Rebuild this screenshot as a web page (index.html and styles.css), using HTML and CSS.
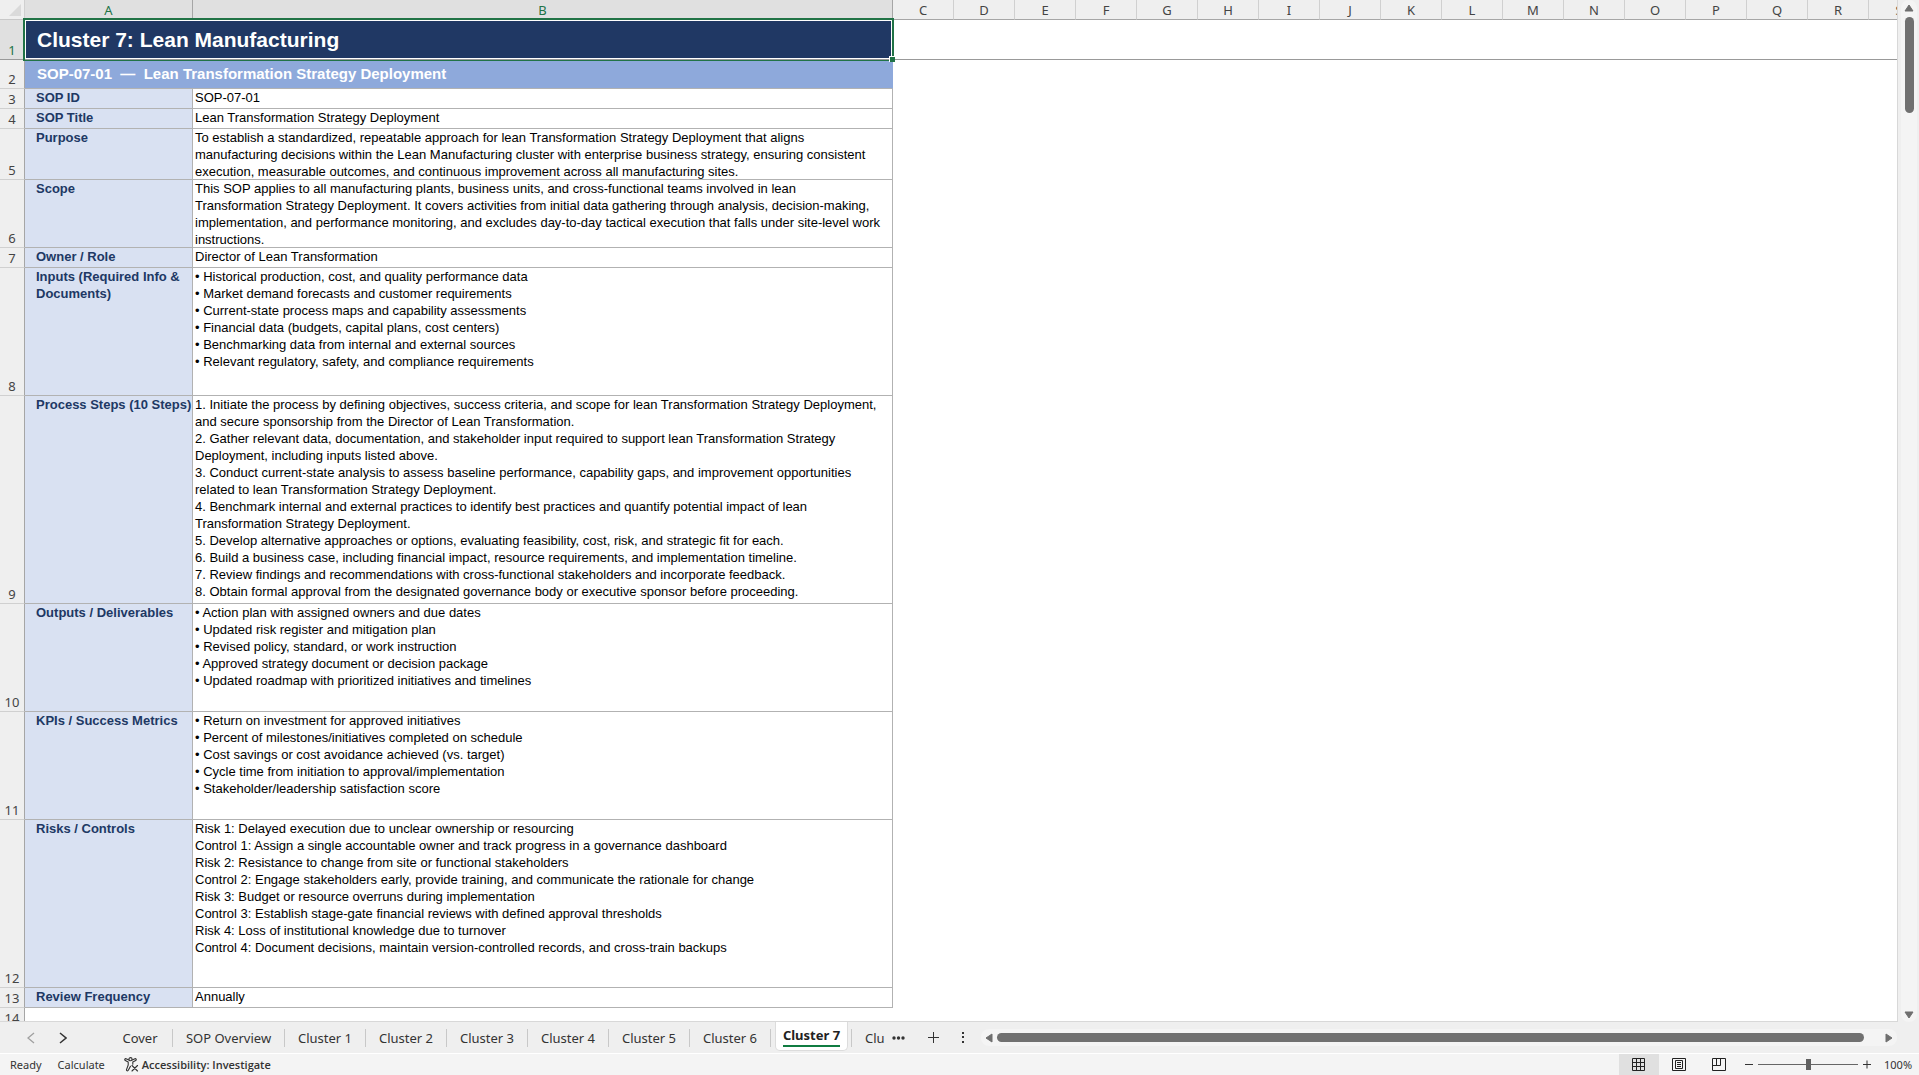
FILE: index.html
```html
<!DOCTYPE html>
<html lang="en">
<head>
<meta charset="utf-8">
<title>Cluster 7: Lean Manufacturing</title>
<meta name="viewport" content="width=device-width, initial-scale=1">
<link rel="stylesheet" href="styles.css">
</head>
<body>
  <div class="workspace">
    <div class="grid">
      <table class="sheet">
        <colgroup>
          <col class="col-num"><col class="col-a"><col class="col-b">
          <col span="17" class="col-std">
        </colgroup>
        <thead>
          <tr>
            <th class="corner"><svg width="12" height="12" viewBox="0 0 12 12"><path d="M12 0v12H0z" fill="#dadada"/></svg></th>
            <th class="active">A</th><th class="active">B</th>
            <th>C</th><th>D</th><th>E</th><th>F</th><th>G</th><th>H</th><th>I</th><th>J</th><th>K</th>
            <th>L</th><th>M</th><th>N</th><th>O</th><th>P</th><th>Q</th><th>R</th><th>S</th>
          </tr>
        </thead>
        <tbody>
          <tr class="row-title frozen">
            <th class="active">1</th>
            <td class="title" colspan="2">Cluster 7: Lean Manufacturing<div class="selection"></div><div class="handle"></div></td>
            <td class="blank" colspan="17"></td>
          </tr>
          <tr class="row-sub">
            <th>2</th>
            <td class="subtitle" colspan="2">SOP-07-01&nbsp; —&nbsp; Lean Transformation Strategy Deployment</td>
          </tr>
          <tr class="row-line"><th>3</th><td class="label">SOP ID</td><td class="text">SOP-07-01</td></tr>
          <tr class="row-line"><th>4</th><td class="label">SOP Title</td><td class="text">Lean Transformation Strategy Deployment</td></tr>
          <tr class="row-purpose">
            <th>5</th><td class="label">Purpose</td>
            <td class="text"><div class="tight">To establish a standardized, repeatable approach for lean Transformation Strategy Deployment that aligns<br>
              manufacturing decisions within the Lean Manufacturing cluster with enterprise business strategy, ensuring consistent<br>
              execution, measurable outcomes, and continuous improvement across all manufacturing sites.</div></td>
          </tr>
          <tr class="row-scope">
            <th>6</th><td class="label">Scope</td>
            <td class="text"><div class="tight">This SOP applies to all manufacturing plants, business units, and cross-functional teams involved in lean<br>
              Transformation Strategy Deployment. It covers activities from initial data gathering through analysis, decision-making,<br>
              implementation, and performance monitoring, and excludes day-to-day tactical execution that falls under site-level work<br>
              instructions.</div></td>
          </tr>
          <tr class="row-line"><th>7</th><td class="label">Owner / Role</td><td class="text">Director of Lean Transformation</td></tr>
          <tr class="row-inputs">
            <th>8</th><td class="label">Inputs (Required Info &amp;<br>Documents)</td>
            <td class="text">• Historical production, cost, and quality performance data<br>
              • Market demand forecasts and customer requirements<br>
              • Current-state process maps and capability assessments<br>
              • Financial data (budgets, capital plans, cost centers)<br>
              • Benchmarking data from internal and external sources<br>
              • Relevant regulatory, safety, and compliance requirements</td>
          </tr>
          <tr class="row-steps">
            <th>9</th><td class="label">Process Steps (10 Steps)</td>
            <td class="text">1. Initiate the process by defining objectives, success criteria, and scope for lean Transformation Strategy Deployment,<br>
              and secure sponsorship from the Director of Lean Transformation.<br>
              2. Gather relevant data, documentation, and stakeholder input required to support lean Transformation Strategy<br>
              Deployment, including inputs listed above.<br>
              3. Conduct current-state analysis to assess baseline performance, capability gaps, and improvement opportunities<br>
              related to lean Transformation Strategy Deployment.<br>
              4. Benchmark internal and external practices to identify best practices and quantify potential impact of lean<br>
              Transformation Strategy Deployment.<br>
              5. Develop alternative approaches or options, evaluating feasibility, cost, risk, and strategic fit for each.<br>
              6. Build a business case, including financial impact, resource requirements, and implementation timeline.<br>
              7. Review findings and recommendations with cross-functional stakeholders and incorporate feedback.<br>
              8. Obtain formal approval from the designated governance body or executive sponsor before proceeding.</td>
          </tr>
          <tr class="row-list">
            <th>10</th><td class="label">Outputs / Deliverables</td>
            <td class="text">• Action plan with assigned owners and due dates<br>
              • Updated risk register and mitigation plan<br>
              • Revised policy, standard, or work instruction<br>
              • Approved strategy document or decision package<br>
              • Updated roadmap with prioritized initiatives and timelines</td>
          </tr>
          <tr class="row-list">
            <th>11</th><td class="label">KPIs / Success Metrics</td>
            <td class="text">• Return on investment for approved initiatives<br>
              • Percent of milestones/initiatives completed on schedule<br>
              • Cost savings or cost avoidance achieved (vs. target)<br>
              • Cycle time from initiation to approval/implementation<br>
              • Stakeholder/leadership satisfaction score</td>
          </tr>
          <tr class="row-risks">
            <th>12</th><td class="label">Risks / Controls</td>
            <td class="text">Risk 1: Delayed execution due to unclear ownership or resourcing<br>
              Control 1: Assign a single accountable owner and track progress in a governance dashboard<br>
              Risk 2: Resistance to change from site or functional stakeholders<br>
              Control 2: Engage stakeholders early, provide training, and communicate the rationale for change<br>
              Risk 3: Budget or resource overruns during implementation<br>
              Control 3: Establish stage-gate financial reviews with defined approval thresholds<br>
              Risk 4: Loss of institutional knowledge due to turnover<br>
              Control 4: Document decisions, maintain version-controlled records, and cross-train backups</td>
          </tr>
          <tr class="row-line"><th>13</th><td class="label">Review Frequency</td><td class="text">Annually</td></tr>
          <tr class="row-line"><th>14</th><td class="blank" colspan="2"></td></tr>
        </tbody>
      </table>
    </div>
    <div class="vscroll">
      <svg width="10" height="8" viewBox="0 0 10 8"><path d="M5 1 9 7H1z" fill="#6f6f6f" stroke="#6f6f6f" stroke-linejoin="round"/></svg>
      <div class="vthumb"></div>
      <svg class="down" width="10" height="8" viewBox="0 0 10 8"><path d="M5 7 9 1H1z" fill="#6f6f6f" stroke="#6f6f6f" stroke-linejoin="round"/></svg>
    </div>
  </div>

  <div class="tabbar">
    <div class="tabnav">
      <button aria-label="Previous sheet"><svg width="8" height="12" viewBox="0 0 8 12"><path d="M7 1 1 6l6 5" fill="none" stroke="#a0a0a0" stroke-width="1.3"/></svg></button>
      <button aria-label="Next sheet"><svg width="8" height="12" viewBox="0 0 8 12"><path d="m1 1 6 5-6 5" fill="none" stroke="#333" stroke-width="1.5"/></svg></button>
    </div>
    <div class="tabs">
      <button class="tab cover">Cover</button>
      <button class="tab overview">SOP Overview</button>
      <button class="tab">Cluster 1</button>
      <button class="tab">Cluster 2</button>
      <button class="tab">Cluster 3</button>
      <button class="tab">Cluster 4</button>
      <button class="tab">Cluster 5</button>
      <button class="tab">Cluster 6</button>
      <button class="tab current"><span>Cluster 7</span></button>
      <button class="tab cut">Clu</button>
    </div>
    <div class="tabtools">
      <button aria-label="More sheets"><svg width="13" height="4" viewBox="0 0 13 4" fill="#333"><circle cx="2" cy="2" r="1.7"/><circle cx="6.5" cy="2" r="1.7"/><circle cx="11" cy="2" r="1.7"/></svg></button>
      <button aria-label="New sheet"><svg width="11" height="11" viewBox="0 0 11 11"><path d="M5.5 0v11M0 5.5h11" stroke="#333"/></svg></button>
      <button aria-label="Resize tabs"><svg width="2" height="11" viewBox="0 0 2 11" fill="#333"><path d="M0 0h2v2H0zM0 4h2v2H0zM0 9h2v2H0z"/></svg></button>
    </div>
    <div class="hscroll">
      <svg width="8" height="10" viewBox="0 0 8 10"><path d="M1 5 7 1v8z" fill="#6f6f6f" stroke="#6f6f6f" stroke-linejoin="round"/></svg>
      <div class="hthumb"></div>
      <svg class="right" width="8" height="10" viewBox="0 0 8 10"><path d="M7 5 1 1v8z" fill="#6f6f6f" stroke="#6f6f6f" stroke-linejoin="round"/></svg>
    </div>
  </div>

  <div class="statusbar">
    <span class="ready">Ready</span>
    <span class="calc">Calculate</span>
    <button class="access">
      <svg width="15" height="15" viewBox="0 0 15 15" fill="none" stroke="#333" stroke-width="1.1" stroke-linecap="round" stroke-linejoin="round"><circle cx="6.500" cy="2.200" r="1.600"/><path d="M4.900 3 2 1.700c-1.100-.3-1.700 1.200-.7 1.700L4.200 5v3L2.500 12.600c-.2 1.200 1.200 1.700 1.800.7L6.500 9.300M8.100 3 11 1.700c1.100-.3 1.700 1.200.7 1.700L8.800 5v2.200M8 8.500l5.500 5.500M13.500 8.500 8 14"/></svg>
      Accessibility: Investigate
    </button>
    <div class="views">
      <button class="view on" aria-label="Normal"><svg width="14" height="14" viewBox="0 0 14 14" fill="none" stroke="#222"><path d="M.5.5h12v12H.5zM4.500.5v12M8.500.5v12M.5 4.500h12M.5 8.500h12"/></svg></button>
      <button class="view" aria-label="Page Layout"><svg width="14" height="14" viewBox="0 0 14 14" fill="none" stroke="#222"><path d="M.5.5h13v12H.5zM3.500 2.500h7v8h-7zM5 4.500h4M5 6.500h4M5 8.500h4"/></svg></button>
      <button class="view" aria-label="Page Break Preview"><svg width="14" height="14" viewBox="0 0 14 14" fill="none" stroke="#222"><path d="M.5.5h13v12H.5zM.5 7.500h8V.5M4.500.5v7"/></svg></button>
    </div>
    <div class="zoom">
      <button aria-label="Zoom out"><svg width="8" height="9" viewBox="0 0 8 9"><path d="M0 4.500h8" stroke="#333"/></svg></button>
      <input type="range" min="0" max="200" value="100" aria-label="Zoom">
      <button aria-label="Zoom in"><svg width="8" height="9" viewBox="0 0 8 9"><path d="M0 4.500h8M4 .5v8" stroke="#333"/></svg></button>
    </div>
    <span class="percent">100%</span>
  </div>
</body>
</html>
```
FILE: styles.css
```css
* { box-sizing: border-box; }
body { margin: 0; height: 100vh; display: flex; flex-direction: column; overflow: hidden; background-color: #efefef; color: #333; font-family: "Noto Sans", "Open Sans", sans-serif; }
button { border: none; padding: 0; background: none; color: inherit; font: inherit; display: flex; align-items: center; justify-content: center; }
svg { display: block; flex: none; }

/* worksheet */
.workspace { flex: 1; min-height: 0; display: flex; }
.grid { flex: 1; min-width: 0; overflow: hidden; background-color: #fff; border-right: 1px solid #d8d8d8; border-bottom: 1px solid #d8d8d8; }
.sheet { table-layout: fixed; width: 1930px; border-collapse: separate; border-spacing: 0; }
.col-num { width: 25px; }
.col-a { width: 168px; }
.col-b { width: 700px; }
.col-std { width: 61px; }
.sheet th { padding: 0; font-size: 13px; font-weight: normal; line-height: 16px; color: #444; background-color: #efefef; }
.sheet thead th { height: 20px; padding-top: 1px; border-right: 1px solid #d0d0d0; border-bottom: 1px solid #a6a6a6; }
.sheet thead th.corner { padding: 0 0 0 9px; border-bottom-color: #c8c8c8; }
.sheet tbody th { padding-bottom: 1px; vertical-align: bottom; border-right: 1px solid #a6a6a6; border-bottom: 1px solid #d0d0d0; }
.sheet .active { background-color: #e0e0e0; color: #217346; }
.sheet thead th.active { border-right-color: #a6a6a6; }
.sheet td { padding: 0; border-right: 1px solid #b2b2b2; border-bottom: 1px solid #b2b2b2; font-family: "Liberation Sans", Arial, sans-serif; font-size: 13px; line-height: 17px; vertical-align: top; white-space: nowrap; color: #000; }
.sheet td.blank { border: none; }
.sheet .frozen th, .sheet .frozen td, .sheet .frozen td.blank { border-bottom: 1px solid #999; }
.sheet td.title { position: relative; padding-left: 12px; background-color: #203864; color: #fff; font-size: 21px; font-weight: bold; vertical-align: middle; }
.sheet td.subtitle { padding: 0 0 2px 12px; border-right-color: #8ea9db; background-color: #8ea9db; color: #fff; font-size: 15px; font-weight: bold; vertical-align: middle; }
.sheet td.label { padding-left: 11px; background-color: #d9e1f2; color: #203864; font-weight: bold; }
.sheet td.text { padding-left: 2px; }
.tight { margin-bottom: -1px; }
.selection { position: absolute; top: -2px; right: -2px; bottom: -2px; left: -2px; border: 2px solid #217346; border-bottom-width: 1px; box-shadow: inset 0 -1px #999, inset 0 0 0 1px #fff, inset 0 -2px #fff; }
.handle { position: absolute; right: -3px; bottom: -3px; width: 6px; height: 6px; background-color: #217346; border-top: 1px solid #fff; border-left: 1px solid #fff; }

.row-title { height: 40px; }
.row-sub { height: 29px; }
.row-line { height: 20px; }
.row-purpose { height: 51px; }
.row-scope { height: 68px; }
.row-inputs { height: 128px; }
.row-steps { height: 208px; }
.row-list { height: 108px; }
.row-risks { height: 168px; }

/* scrollbars */
.vscroll { width: 16px; margin: 0 2px 0 3px; padding: 4px 0 3px; border-radius: 8px; background-color: #f4f4f4; display: flex; flex-direction: column; align-items: center; }
.vthumb { width: 9px; height: 96px; margin-top: 5px; border-radius: 5px; background-color: #707070; }
.vscroll .down { margin-top: auto; }
.hscroll { flex: 1; height: 17px; margin-right: 22px; padding: 0 4px; border-radius: 8px; background-color: #f4f4f4; display: flex; align-items: center; }
.hthumb { flex: 1; height: 9px; margin: 0 21px 0 4px; border-radius: 5px; background-color: #707070; }

/* sheet tabs */
.tabbar { height: 32px; display: flex; align-items: center; border-bottom: 1px solid #fff; }
.tabnav { width: 108px; padding-left: 27px; display: flex; gap: 24px; }
.tabs { display: flex; align-items: center; height: 31px; font-size: 13px; }
.tab { width: 81px; height: 18px; border-right: 1px solid #c8c8c8; white-space: nowrap; }
.tab.cover { width: 65px; }
.tab.overview { width: 112px; }
.tab.current { width: 73px; height: 29px; margin: 0 3px 0 4px; align-self: flex-start; border: 1px solid #dcdcdc; border-top: none; border-radius: 0 0 5px 5px; background-color: #fff; color: #222; font-weight: bold; }
.tab.current span { line-height: 19px; border-bottom: 2px solid #107c41; }
.tab.cut { width: 41px; padding-left: 13px; border-right: none; border-left: 1px solid #c8c8c8; justify-content: flex-start; }
.tabtools { display: flex; align-items: center; gap: 23px; margin-right: 17px; }

/* status bar */
.statusbar { height: 21px; display: flex; align-items: center; padding-left: 10px; background-color: #f4f4f4; font-size: 11px; line-height: 16px; }
.calc { margin-left: 16px; }
.access { margin-left: 19px; gap: 3px; font-family: "Open Sans", "Noto Sans", sans-serif; font-weight: 600; }
.views { display: flex; align-self: stretch; margin-left: auto; }
.view { width: 40px; }
.view.on { background-color: #e0e0e0; }
.zoom { display: flex; align-items: center; gap: 5px; margin-left: 6px; }
.zoom input { -webkit-appearance: none; appearance: none; width: 100px; height: 11px; margin: 0; background: linear-gradient(#666, #666) center / 100% 1px no-repeat; }
.zoom input::-webkit-slider-thumb { -webkit-appearance: none; width: 5px; height: 11px; background-color: #606060; }
.percent { width: 48px; padding-left: 13px; }
```
